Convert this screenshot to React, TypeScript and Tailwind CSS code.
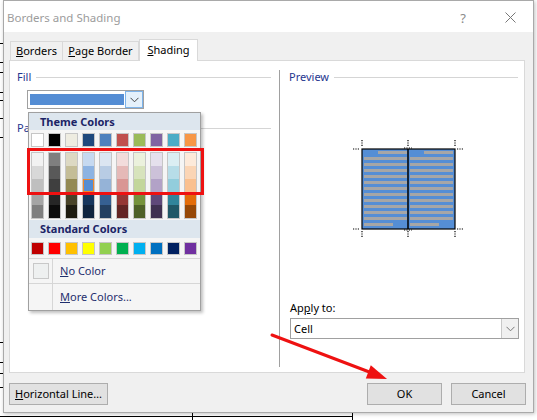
import React from "react";

const themeBase = [
  "#FFFFFF", "#000000", "#EEECE1", "#1F497D", "#4F81BD",
  "#C0504D", "#9BBB59", "#8064A2", "#4BACC6", "#F79646",
];

const themeShades = [
  ["#F2F2F2", "#D8D8D8", "#BFBFBF", "#A5A5A5", "#7F7F7F"],
  ["#7F7F7F", "#595959", "#3F3F3F", "#262626", "#0C0C0C"],
  ["#DDD9C3", "#C4BD97", "#938953", "#494429", "#1D1B10"],
  ["#C6D9F0", "#8DB3E2", "#548DD4", "#17365D", "#0F243E"],
  ["#DBE5F1", "#B8CCE4", "#95B3D7", "#366092", "#244061"],
  ["#F2DCDB", "#E5B9B7", "#D99694", "#953734", "#632423"],
  ["#EBF1DD", "#D7E3BC", "#C3D69B", "#76923C", "#4F6128"],
  ["#E5E0EC", "#CCC1D9", "#B2A2C7", "#5F497A", "#3F3151"],
  ["#DBEEF3", "#B7DDE8", "#92CDDC", "#31859B", "#205867"],
  ["#FDEADA", "#FBD5B5", "#FAC08F", "#E36C09", "#974806"],
];

const standard = [
  "#C00000", "#FF0000", "#FFC000", "#FFFF00", "#92D050",
  "#00B050", "#00B0F0", "#0070C0", "#002060", "#7030A0",
];

const Chevron = ({ color = "#444" }: { color?: string }) => (
  <svg width="9" height="6" viewBox="0 0 9 6">
    <path d="M0.5 0.8 L4.5 4.8 L8.5 0.8" fill="none" stroke={color} strokeWidth="1" />
  </svg>
);

const GroupHeader = ({ label, className }: { label: string; className?: string }) => (
  <div className={`flex items-center h-[14px] ${className ?? ""}`}>
    <span className="text-[#1f3690] leading-[14px]">{label}</span>
    <div className="flex-1 h-px bg-[#d5d5d5] ml-[5px]" />
  </div>
);

// preview drawing: shaded cell pair with text lines and dotted corner marks
const Preview = () => {
  const lines = Array.from({ length: 13 }, (_, i) => i);
  const bx = 12;
  const by = 11;
  return (
    <svg width="120" height="100" viewBox="0 0 120 100">
      <rect x={bx} y={by} width="93" height="80" fill="#558ED5" />
      {[0, 1].map((c) => {
        const cx = bx + 2 + c * 46;
        return lines.map((i) => {
          const y = by + 2 + i * 6;
          let x = cx;
          let w = 43;
          if (i === 0) {
            x = cx + 14;
            w = 29;
          }
          if (i === 12) w = 29;
          return <rect key={`${c}-${i}`} x={x} y={y} width={w} height="3" fill="#A6A6A6" />;
        });
      })}
      <rect x={bx} y={by} width="93" height="80" fill="none" stroke="#000" strokeWidth="1.2" />
      <line x1={bx + 46} y1={by} x2={bx + 46} y2={by + 80} stroke="#000" strokeWidth="1.5" />
      <g stroke="#000" strokeWidth="1.2" strokeDasharray="1.2 1.2">
        {[bx, bx + 46, bx + 93].map((x) => (
          <React.Fragment key={x}>
            <line x1={x} y1={by - 9} x2={x} y2={by - 2} />
            <line x1={x} y1={by + 82} x2={x} y2={by + 89} />
          </React.Fragment>
        ))}
        <line x1={bx - 9} y1={by} x2={bx - 2} y2={by} />
        <line x1={bx + 95} y1={by} x2={bx + 102} y2={by} />
        <line x1={bx - 9} y1={by + 80} x2={bx - 2} y2={by + 80} />
        <line x1={bx + 95} y1={by + 80} x2={bx + 102} y2={by + 80} />
        <line x1={bx + 42} y1={by - 1} x2={bx + 50} y2={by - 1} />
        <line x1={bx + 42} y1={by + 81} x2={bx + 50} y2={by + 81} />
      </g>
    </svg>
  );
};

const ColorPopup = () => (
  <div className="absolute left-[28px] top-[112px] w-[173px] h-[199px] border border-[#a0a0a0] bg-[#f5f5f5] shadow-[2px_2px_3px_rgba(0,0,0,0.25)] flex flex-col">
    <div className="h-[17px] bg-[#dde6ee] pl-[11px] flex items-center font-bold text-[#1b2466]">
      Theme Colors
    </div>
    <div className="flex gap-[4px] pl-[2px] mt-[3px]">
      {themeBase.map((c) => (
        <div key={c} className="w-[13px] h-[14px] border border-[#c6c6c6]" style={{ background: c }} />
      ))}
    </div>
    <div className="flex gap-[4px] pl-[2px] mt-[5px]">
      {themeShades.map((col, ci) => (
        <div key={ci} className="w-[13px] border border-[#c6c6c6] flex flex-col">
          {col.map((c, ri) =>
            ci === 3 && ri === 2 ? (
              <div key={c} className="h-[13px] border border-[#f0882a] bg-[#548DD4]" />
            ) : (
              <div key={c} className="h-[13px]" style={{ background: c }} />
            )
          )}
        </div>
      ))}
    </div>
    <div className="h-[18px] mt-[1px] bg-[#dde6ee] pl-[11px] flex items-center font-bold text-[#1b2466]">
      Standard Colors
    </div>
    <div className="flex gap-[4px] pl-[2px] mt-[4px]">
      {standard.map((c) => (
        <div key={c} className="w-[13px] h-[13px] border border-[#c6c6c6]" style={{ background: c }} />
      ))}
    </div>
    <div className="h-px bg-[#d6d6d6] mt-[3px]" />
    <div className="flex h-[24px]">
      <div className="w-[24px] border-r border-[#d6d6d6] flex items-center pl-[4px]">
        <div className="w-[16px] h-[16px] border border-[#c8c8c8] bg-[#eef0f0]" />
      </div>
      <div className="pl-[7px] flex items-center text-[#1f2f6e]">
        <u>N</u>o Color
      </div>
    </div>
    <div className="h-px bg-[#d6d6d6]" />
    <div className="flex flex-1">
      <div className="w-[24px] border-r border-[#d6d6d6]" />
      <div className="pl-[7px] flex items-center text-[#1f2f6e]">
        <u>M</u>ore Colors...
      </div>
    </div>
  </div>
);

const Button = ({ children, className }: { children: React.ReactNode; className?: string }) => (
  <div className={`h-[22px] bg-[#e1e1e1] border border-[#adadad] flex items-center justify-center whitespace-nowrap ${className ?? ""}`}>
    {children}
  </div>
);

export default function App() {
  return (
    <div className="relative w-[537px] h-[420px] bg-white overflow-hidden font-['Noto_Sans',sans-serif] text-[11px] text-black leading-[16px]">
      {/* document behind the dialog */}
      {[43, 62, 72, 92, 100, 118, 137, 342, 362, 373, 387].map((y) => (
        <div key={y} className="absolute left-0 w-[3px] h-px bg-black" style={{ top: y }} />
      ))}
      <div className="absolute left-0 top-[416px] w-[353px] h-px bg-black" />
      <div className="absolute left-[192px] top-[413px] w-px h-[7px] bg-black" />
      <div className="absolute left-[352px] top-[413px] w-px h-[7px] bg-black" />

      {/* dialog window */}
      <div className="ml-[3px] w-[531px] h-[413px] border border-[#a9a9a9] bg-white flex flex-col shadow-[1px_1px_4px_rgba(0,0,0,0.25)]">
        <div className="h-[31px] flex items-center pt-[2px] pl-[3px] text-[#9c9c9c]">
          <span className="text-[11.5px]">Borders and Shading</span>
          <span className="ml-auto mr-[39px] text-[13px] text-[#8a8a8a]">?</span>
          <svg width="11" height="11" viewBox="0 0 11 11" className="mr-[17px]">
            <path d="M0.5 0.5 L10.5 10.5 M10.5 0.5 L0.5 10.5" stroke="#777" strokeWidth="1" />
          </svg>
        </div>

        <div className="flex-1 bg-[#f0f0f0] flex flex-col">
          {/* tabs */}
          <div className="flex items-end pl-[6px] mt-[7px] relative z-10 whitespace-nowrap">
            <div className="w-[53px] h-[19px] border border-[#d9d9d9] border-b-0 flex items-center justify-center">
              <span><u>B</u>orders</span>
            </div>
            <div className="w-[76px] h-[19px] border-t border-r border-[#d9d9d9] flex items-center justify-center">
              <span><u>P</u>age Border</span>
            </div>
            <div className="w-[59px] h-[22px] bg-white border border-[#d9d9d9] border-b-0 flex items-center justify-center -mb-px pb-[2px]">
              <span><u>S</u>hading</span>
            </div>
          </div>

          {/* tab panel */}
          <div className="ml-[5px] w-[516px] h-[313px] bg-white border border-[#d9d9d9] flex">
            <div className="w-[269px] flex flex-col">
              <GroupHeader label="Fill" className="mt-[9px] pl-[7px] pr-[8px]" />
              <div className="ml-[17px] mt-[6px] w-[117px] h-[19px] border border-[#a0a0a0] bg-white flex items-center">
                <div className="ml-[2px] w-[94px] h-[11px] bg-[#548DD4]" />
                <div className="ml-auto w-[18px] h-[17px] bg-[#e5f1fb] border border-[#7eb4ea] flex items-center justify-center">
                  <Chevron />
                </div>
              </div>
              <GroupHeader label="Pattern" className="mt-[12px] pl-[7px] pr-[8px]" />
            </div>
            <div className="w-px bg-[#a0a0a0] mt-[9px] mb-[5px]" />
            <div className="flex-1 flex flex-col">
              <GroupHeader label="Preview" className="mt-[9px] pl-[9px] pr-[6px]" />
              <div className="ml-[70px] mt-[54px]">
                <Preview />
              </div>
              <div className="ml-[10px] mt-[62px]">
                Ap<u>p</u>ly to:
              </div>
              <div className="ml-[10px] mt-[2px] w-[229px] h-[21px] border border-[#a0a0a0] bg-white flex items-center">
                <span className="pl-[3px]">Cell</span>
                <div className="ml-auto w-[17px] h-full border-l border-[#c8c8c8] bg-[#f0f0f0] flex items-center justify-center">
                  <Chevron color="#777" />
                </div>
              </div>
            </div>
          </div>

          {/* bottom buttons */}
          <div className="flex mt-[10px] pl-[5px] pr-[7px]">
            <Button className="w-[99px]">
              <span><u>H</u>orizontal Line…</span>
            </Button>
            <Button className="w-[75px] ml-auto">OK</Button>
            <Button className="w-[75px] ml-[9px]">Cancel</Button>
          </div>
        </div>
      </div>

      <ColorPopup />

      {/* red highlight rectangle */}
      <div className="absolute left-[27px] top-[148px] w-[177px] h-[47px] border-[3px] border-[#ee1111]" />

      {/* red arrow */}
      <svg className="absolute left-0 top-0" width="537" height="420" viewBox="0 0 537 420">
        <line x1="272" y1="335" x2="372" y2="373" stroke="#ee1111" strokeWidth="3" strokeLinecap="round" />
        <polygon points="387,379 365.8,378.5 370.8,365.3" fill="#ee1111" />
      </svg>
    </div>
  );
}
